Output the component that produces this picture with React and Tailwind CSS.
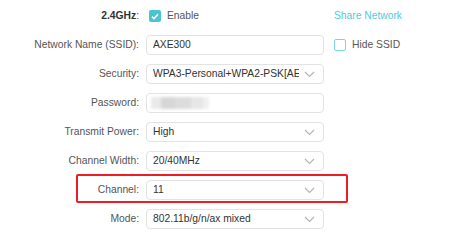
import React from 'react';

const Chevron = () => (
  <svg width="11" height="7" viewBox="0 0 11 7" className="shrink-0">
    <path d="M1 1l4.5 4.5L10 1" fill="none" stroke="#b5b5b5" strokeWidth="1.2" />
  </svg>
);

const Field = ({ value, select }) => (
  <div className="flex h-[20px] w-[178px] items-center justify-between gap-[5px] rounded-[4px] border border-[#e3e3e3] bg-white pl-[6px] pr-[8px] text-[10.3px] text-[#333]">
    <span className="min-w-0 overflow-hidden whitespace-nowrap">{value}</span>
    {select && <Chevron />}
  </div>
);

const Row = ({ label, children, right, extra }) => (
  <div className="relative flex h-[20px] items-center">
    {extra}
    <div className="w-[140px] shrink-0 whitespace-nowrap pr-[1px] text-right text-[10.3px] text-[#555]">{label}</div>
    <div className="ml-[6px] flex items-center">{children}</div>
    {right}
  </div>
);

const App = () => {
  return (
    <div className="h-[239px] w-[453px] bg-white pt-[6px] font-['Liberation_Sans',Arial,sans-serif]">
      <div className="flex flex-col gap-[9px]">
        <Row
          label={<span><b className="text-[#333]">2.4GHz</b>:</span>}
          right={<span className="ml-auto mr-[51px] text-[10.3px] text-[#4ccbd8]">Share Network</span>}
        >
          <div className="ml-[3px] flex h-[12px] w-[12px] items-center justify-center rounded-[2px] bg-[#4ac3d3]">
            <svg width="8" height="7" viewBox="0 0 8 7">
              <path d="M1 3.6l2 2L7 1.2" fill="none" stroke="#fff" strokeWidth="1.5" />
            </svg>
          </div>
          <span className="ml-[6px] text-[10.3px] text-[#555]">Enable</span>
        </Row>
        <Row
          label="Network Name (SSID):"
          right={
            <div className="ml-[10px] flex items-center">
              <div className="h-[12px] w-[12px] rounded-[2px] border border-[#7dd5df]" />
              <span className="ml-[6px] text-[10.3px] text-[#555]">Hide SSID</span>
            </div>
          }
        >
          <Field value="AXE300" />
        </Row>
        <Row label="Security:">
          <Field value="WPA3-Personal+WPA2-PSK[AES]" select />
        </Row>
        <Row label="Password:">
          <div className="flex h-[20px] w-[178px] items-center rounded-[4px] border border-[#e3e3e3] bg-white pl-[4px]">
            <div className="flex h-[12px] blur-[1.5px]">
              <div className="w-[10px] bg-[#eaeaea]" />
              <div className="w-[14px] bg-[#d6d6d6]" />
              <div className="w-[16px] bg-[#dcdcdc]" />
              <div className="w-[12px] bg-[#e6e6e6]" />
              <div className="w-[6px] bg-[#f0f0f0]" />
            </div>
          </div>
        </Row>
        <Row label="Transmit Power:">
          <Field value="High" select />
        </Row>
        <Row label="Channel Width:">
          <Field value="20/40MHz" select />
        </Row>
        <Row
          label="Channel:"
          extra={<div className="absolute left-[76px] top-[-6px] h-[29px] w-[272px] rounded-[2px] border-2 border-[#ee1c24]" />}
        >
          <Field value="11" select />
        </Row>
        <Row label="Mode:">
          <Field value="802.11b/g/n/ax mixed" select />
        </Row>
      </div>
    </div>
  );
};

export default App;
